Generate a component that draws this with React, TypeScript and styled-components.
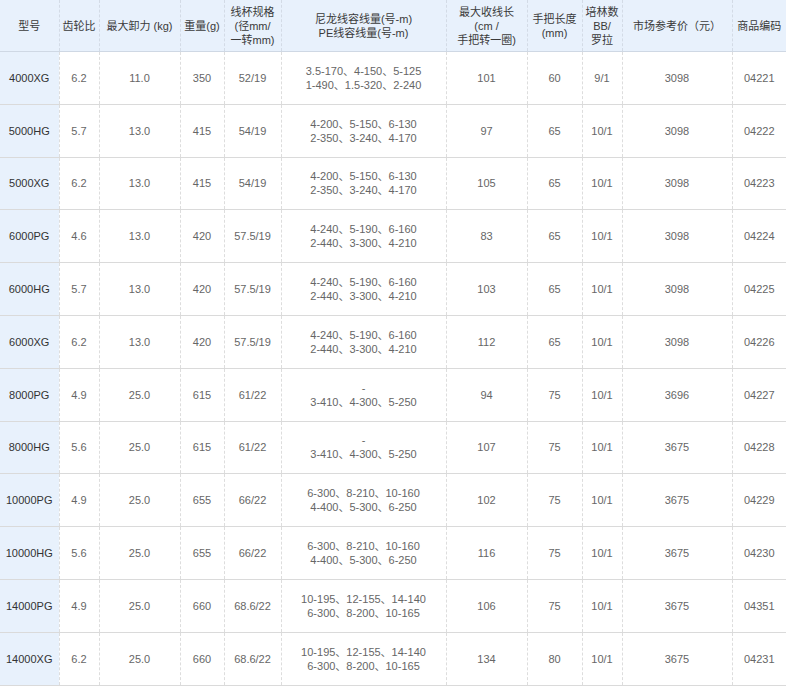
import React from 'react';
import styled, { createGlobalStyle } from 'styled-components';

const GlobalStyle = createGlobalStyle`
  html, body {
    margin: 0;
    padding: 0;
    background: #fff;
  }
  body {
    font-family: "Liberation Sans", Arial, "Noto Sans CJK SC", sans-serif;
  }
`;

const Table = styled.table`
  width: 786px;
  table-layout: fixed;
  border-collapse: collapse;
  font-size: 11px;
  line-height: 14px;
`;

const HeadCell = styled.th`
  height: 51px;
  padding: 0 2px;
  background: #e8f1fc;
  color: #3a3a3a;
  font-weight: normal;
  text-align: center;
  vertical-align: middle;
  border-bottom: 1px solid #cfd8e4;
  border-left: 1px dashed #d3dbe6;
  &:first-child {
    border-left: none;
  }
`;

const Row = styled.tr`
  height: 52.8px;
`;

const Cell = styled.td<{ $model?: boolean }>`
  padding: 0 2px;
  text-align: center;
  vertical-align: middle;
  color: ${(p) => (p.$model ? '#333' : '#666')};
  background: ${(p) => (p.$model ? '#e8f1fc' : '#fff')};
  border-bottom: 1px solid #dadada;
  border-left: 1px dashed #dddddd;
  &:first-child {
    border-left: none;
  }
`;

const Line = styled.div`
  white-space: nowrap;
`;

const widths = [59, 40, 81, 44, 57, 165, 81, 55, 40, 110, 54];

const headers: string[][] = [
  ['型号'],
  ['齿轮比'],
  ['最大卸力 (kg)'],
  ['重量(g)'],
  ['线杯规格', '(径mm/', '一转mm)'],
  ['尼龙线容线量(号-m)', 'PE线容线量(号-m)'],
  ['最大收线长', '(cm /', '手把转一圈)'],
  ['手把长度', '(mm)'],
  ['培林数', 'BB/', '罗拉'],
  ['市场参考价（元）'],
  ['商品编码'],
];

const cap4000 = ['3.5-170、4-150、5-125', '1-490、1.5-320、2-240'];
const cap5000 = ['4-200、5-150、6-130', '2-350、3-240、4-170'];
const cap6000 = ['4-240、5-190、6-160', '2-440、3-300、4-210'];
const cap8000 = ['-', '3-410、4-300、5-250'];
const cap10000 = ['6-300、8-210、10-160', '4-400、5-300、6-250'];
const cap14000 = ['10-195、12-155、14-140', '6-300、8-200、10-165'];

type Spec = {
  model: string;
  gear: string;
  drag: string;
  weight: string;
  spool: string;
  capacity: string[];
  retrieve: string;
  handle: string;
  bearings: string;
  price: string;
  code: string;
};

const rows: Spec[] = [
  { model: '4000XG', gear: '6.2', drag: '11.0', weight: '350', spool: '52/19', capacity: cap4000, retrieve: '101', handle: '60', bearings: '9/1', price: '3098', code: '04221' },
  { model: '5000HG', gear: '5.7', drag: '13.0', weight: '415', spool: '54/19', capacity: cap5000, retrieve: '97', handle: '65', bearings: '10/1', price: '3098', code: '04222' },
  { model: '5000XG', gear: '6.2', drag: '13.0', weight: '415', spool: '54/19', capacity: cap5000, retrieve: '105', handle: '65', bearings: '10/1', price: '3098', code: '04223' },
  { model: '6000PG', gear: '4.6', drag: '13.0', weight: '420', spool: '57.5/19', capacity: cap6000, retrieve: '83', handle: '65', bearings: '10/1', price: '3098', code: '04224' },
  { model: '6000HG', gear: '5.7', drag: '13.0', weight: '420', spool: '57.5/19', capacity: cap6000, retrieve: '103', handle: '65', bearings: '10/1', price: '3098', code: '04225' },
  { model: '6000XG', gear: '6.2', drag: '13.0', weight: '420', spool: '57.5/19', capacity: cap6000, retrieve: '112', handle: '65', bearings: '10/1', price: '3098', code: '04226' },
  { model: '8000PG', gear: '4.9', drag: '25.0', weight: '615', spool: '61/22', capacity: cap8000, retrieve: '94', handle: '75', bearings: '10/1', price: '3696', code: '04227' },
  { model: '8000HG', gear: '5.6', drag: '25.0', weight: '615', spool: '61/22', capacity: cap8000, retrieve: '107', handle: '75', bearings: '10/1', price: '3675', code: '04228' },
  { model: '10000PG', gear: '4.9', drag: '25.0', weight: '655', spool: '66/22', capacity: cap10000, retrieve: '102', handle: '75', bearings: '10/1', price: '3675', code: '04229' },
  { model: '10000HG', gear: '5.6', drag: '25.0', weight: '655', spool: '66/22', capacity: cap10000, retrieve: '116', handle: '75', bearings: '10/1', price: '3675', code: '04230' },
  { model: '14000PG', gear: '4.9', drag: '25.0', weight: '660', spool: '68.6/22', capacity: cap14000, retrieve: '106', handle: '75', bearings: '10/1', price: '3675', code: '04351' },
  { model: '14000XG', gear: '6.2', drag: '25.0', weight: '660', spool: '68.6/22', capacity: cap14000, retrieve: '134', handle: '80', bearings: '10/1', price: '3675', code: '04231' },
];

const App: React.FC = () => {
  return (
    <>
      <GlobalStyle />
      <Table>
        <colgroup>
          {widths.map((w, i) => (
            <col key={i} style={{ width: w }} />
          ))}
        </colgroup>
        <thead>
          <tr>
            {headers.map((lines, i) => (
              <HeadCell key={i}>
                {lines.map((l, j) => (
                  <Line key={j}>{l}</Line>
                ))}
              </HeadCell>
            ))}
          </tr>
        </thead>
        <tbody>
          {rows.map((r) => (
            <Row key={r.model}>
              <Cell $model>{r.model}</Cell>
              <Cell>{r.gear}</Cell>
              <Cell>{r.drag}</Cell>
              <Cell>{r.weight}</Cell>
              <Cell>{r.spool}</Cell>
              <Cell>
                {r.capacity.map((l, j) => (
                  <Line key={j}>{l}</Line>
                ))}
              </Cell>
              <Cell>{r.retrieve}</Cell>
              <Cell>{r.handle}</Cell>
              <Cell>{r.bearings}</Cell>
              <Cell>{r.price}</Cell>
              <Cell>{r.code}</Cell>
            </Row>
          ))}
        </tbody>
      </Table>
    </>
  );
};

export default App;
